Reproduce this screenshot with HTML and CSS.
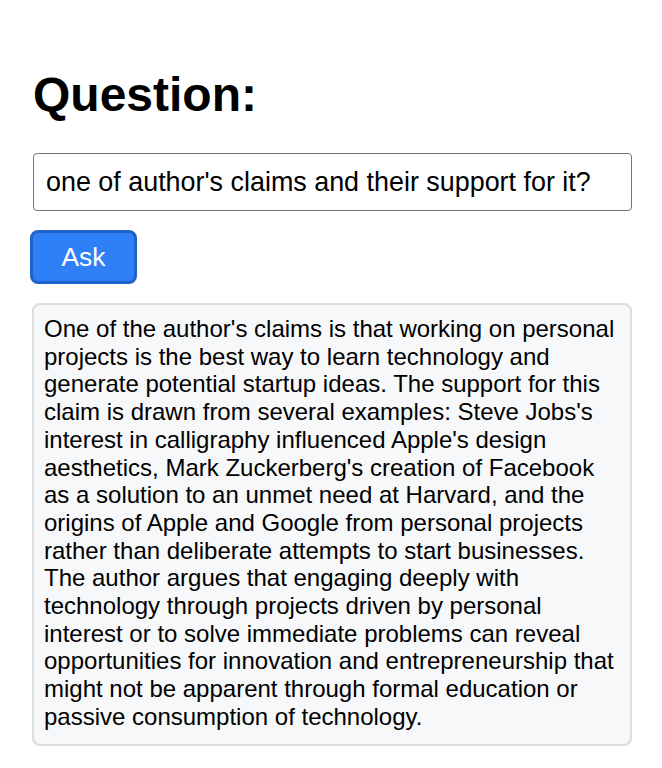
FILE: index.html
```html
<!DOCTYPE html>
<html lang="en">
<head>
<meta charset="utf-8">
<title>Question</title>
<link rel="stylesheet" href="styles.css">
</head>
<body>
<main class="page">
  <h1 class="title">Question:</h1>
  <input class="question" type="text" value="one of author's claims and their support for it?">
  <button class="ask" type="button">Ask</button>
  <div class="answer">One of the author's claims is that working on personal projects is the best way to learn technology and generate potential startup ideas. The support for this claim is drawn from several examples: Steve Jobs's interest in calligraphy influenced Apple's design aesthetics, Mark Zuckerberg's creation of Facebook as a solution to an unmet need at Harvard, and the origins of Apple and Google from personal projects rather than deliberate attempts to start businesses. The author argues that engaging deeply with technology through projects driven by personal interest or to solve immediate problems can reveal opportunities for innovation and entrepreneurship that might not be apparent through formal education or passive consumption of technology.</div>
</main>
</body>
</html>
```
FILE: styles.css
```css
html, body {
  margin: 0;
  padding: 0;
  background: #ffffff;
}

body {
  font-family: "Liberation Sans", Arial, sans-serif;
  color: #000000;
}

.page {
  display: flex;
  flex-direction: column;
  align-items: flex-start;
  padding: 67px 30px 20px 32px;
}

.title {
  font-size: 48px;
  font-weight: bold;
  line-height: 55px;
  margin: 0 0 31px 1px;
}

.question {
  box-sizing: border-box;
  align-self: stretch;
  height: 58px;
  margin: 0 0 19px 1px;
  padding: 0 12px;
  font-family: "Liberation Sans", Arial, sans-serif;
  font-size: 26.9px;
  color: #000000;
  border: 1px solid #767676;
  border-radius: 4px;
  background: #ffffff;
}

.ask {
  box-sizing: border-box;
  width: 107px;
  height: 54px;
  margin: 0 0 19px -2px;
  padding: 0;
  font-family: "Liberation Sans", Arial, sans-serif;
  font-size: 26.4px;
  color: #ffffff;
  background: #2f7ff6;
  border: 3px solid #1f62c9;
  border-radius: 8px;
}

.answer {
  box-sizing: border-box;
  align-self: stretch;
  padding: 10px 10px 13px 10px;
  font-size: 24px;
  line-height: 27.7px;
  background: #f7f8fa;
  border: 2px solid #dcdddf;
  border-radius: 8px;
}
```
